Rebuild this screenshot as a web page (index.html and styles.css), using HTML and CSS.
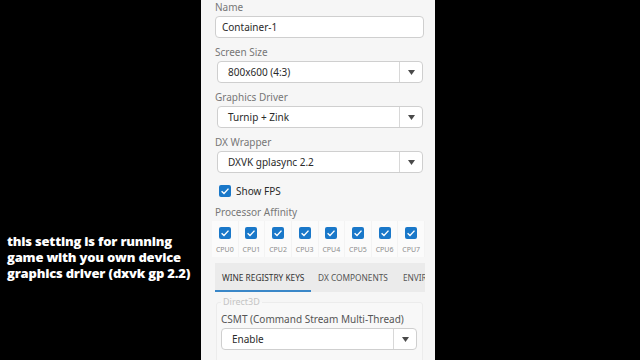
FILE: index.html
```html
<!DOCTYPE html>
<html lang="en">
<head>
  <meta charset="UTF-8" />
  <title>Container Settings</title>
  <link rel="stylesheet" href="styles.css">
</head>
<body>
  <div class="caption">
    this setting is for running game with you own device graphics driver (dxvk gp 2.2)
  </div>

  <div class="panel">
    <label class="field-label">Name</label>
    <div class="input">Container-1</div>

    <label class="field-label">Screen Size</label>
    <div class="select"><span class="value">800x600 (4:3)</span><span class="arrow"><svg viewBox="0 0 7 5"><path d="M0 0 H7 L3.5 5 Z" /></svg></span></div>

    <label class="field-label">Graphics Driver</label>
    <div class="select"><span class="value">Turnip + Zink</span><span class="arrow"><svg viewBox="0 0 7 5"><path d="M0 0 H7 L3.5 5 Z" /></svg></span></div>

    <label class="field-label">DX Wrapper</label>
    <div class="select"><span class="value">DXVK gplasync 2.2</span><span class="arrow"><svg viewBox="0 0 7 5"><path d="M0 0 H7 L3.5 5 Z" /></svg></span></div>

    <div class="check-row">
      <span class="box"><svg viewBox="0 0 12 12"><path d="M2.6 6.2 L5 8.5 L9.5 3.6" /></svg></span>
      <span>Show FPS</span>
    </div>

    <label class="field-label">Processor Affinity</label>
    <div class="cpus">
      <div class="cpu"><span class="box"><svg viewBox="0 0 12 12"><path d="M2.6 6.2 L5 8.5 L9.5 3.6" /></svg></span><span>CPU0</span></div>
      <div class="cpu"><span class="box"><svg viewBox="0 0 12 12"><path d="M2.6 6.2 L5 8.5 L9.5 3.6" /></svg></span><span>CPU1</span></div>
      <div class="cpu"><span class="box"><svg viewBox="0 0 12 12"><path d="M2.6 6.2 L5 8.5 L9.5 3.6" /></svg></span><span>CPU2</span></div>
      <div class="cpu"><span class="box"><svg viewBox="0 0 12 12"><path d="M2.6 6.2 L5 8.5 L9.5 3.6" /></svg></span><span>CPU3</span></div>
      <div class="cpu"><span class="box"><svg viewBox="0 0 12 12"><path d="M2.6 6.2 L5 8.5 L9.5 3.6" /></svg></span><span>CPU4</span></div>
      <div class="cpu"><span class="box"><svg viewBox="0 0 12 12"><path d="M2.6 6.2 L5 8.5 L9.5 3.6" /></svg></span><span>CPU5</span></div>
      <div class="cpu"><span class="box"><svg viewBox="0 0 12 12"><path d="M2.6 6.2 L5 8.5 L9.5 3.6" /></svg></span><span>CPU6</span></div>
      <div class="cpu"><span class="box"><svg viewBox="0 0 12 12"><path d="M2.6 6.2 L5 8.5 L9.5 3.6" /></svg></span><span>CPU7</span></div>
    </div>

    <div class="tabs">
      <div class="tab active">WINE REGISTRY KEYS</div>
      <div class="tab">DX COMPONENTS</div>
      <div class="tab">ENVIR</div>
    </div>

    <fieldset class="group">
      <legend class="legend">Direct3D</legend>
      <div class="group-label">CSMT (Command Stream Multi-Thread)</div>
      <div class="select small"><span class="value">Enable</span><span class="arrow"><svg viewBox="0 0 7 5"><path d="M0 0 H7 L3.5 5 Z" /></svg></span></div>
    </fieldset>
  </div>
</body>
</html>
```

FILE: styles.css
```css
html, body { margin: 0; padding: 0; }
body { width: 640px; height: 360px; background: #000; overflow: hidden; position: relative; font-family: "Noto Sans", Roboto, sans-serif; }

.caption { position: absolute; left: 7px; top: 233px; width: 196px; color: #fff; font-family: "Open Sans", sans-serif; font-weight: 800; font-size: 13px; line-height: 16px; letter-spacing: -0.2px; }

.panel { position: absolute; left: 201px; top: 0; width: 234px; height: 360px; background: #f6f6f6; box-sizing: border-box; padding: 1px 10px 0 14px; overflow: hidden; }

.field-label { display: block; color: #777; font-size: 10px; line-height: 13px; margin: 0 0 2px 0; }

.input, .select { box-sizing: border-box; height: 22px; background: #fff; border: 1px solid #cfcfcf; border-radius: 4px; font-size: 10px; color: #2a2a2a; display: flex; align-items: center; margin-bottom: 8px; }
.input { padding-left: 6px; width: 209px; }
.select { margin-left: 2px; width: 206px; }
.select .value { flex: 1; padding-left: 10px; }
.select .arrow { width: 22px; height: 100%; border-left: 1px solid #d8d8d8; display: flex; align-items: center; justify-content: center; }
.select .arrow svg { width: 7px; height: 5px; }
.select .arrow path { fill: #4a4a4a; }

.check-row { display: flex; align-items: center; gap: 5px; font-size: 10px; line-height: 12px; color: #2a2a2a; margin: 12px 0 9px 4px; }

.box { width: 12px; height: 12px; background: #1a78c9; border-radius: 2px; display: inline-flex; flex: none; }
.box svg { width: 12px; height: 12px; }
.box path { fill: none; stroke: #fff; stroke-width: 1.4; }

.cpus { display: flex; margin-left: -3px; }
.cpu { width: 26.8px; height: 36px; display: flex; flex-direction: column; align-items: center; padding-top: 6px; box-sizing: border-box; gap: 6px; font-size: 7px; line-height: 9px; color: #8c8c8c; background: #fbfbfb; border-right: 1px solid #f3f3f3; }

.tabs { display: flex; background: #ebebeb; height: 29px; margin-top: 6px; width: 210px; overflow: hidden; }
.tab { font-size: 8.3px; color: #555; display: flex; align-items: center; padding: 0 8px 0 7px; white-space: nowrap; box-sizing: border-box; flex: none; }
.tab.active { width: 96px; color: #333; border-bottom: 2px solid #3a87c8; padding-top: 2px; }

.group { margin: 4px 0 0 1px; padding: 0 5px 10px 4px; width: 207px; box-sizing: border-box; border: 1px solid #ececec; border-radius: 3px; background: #f8f8f8; }
.legend { font-size: 9px; color: #c4c4c4; line-height: 12px; padding: 0 2px; margin-left: 0; }
.group-label { font-size: 10px; color: #555; line-height: 13px; margin: 5px 0 2px 0; }
.select.small { width: 196px; margin-left: 0; }
```
